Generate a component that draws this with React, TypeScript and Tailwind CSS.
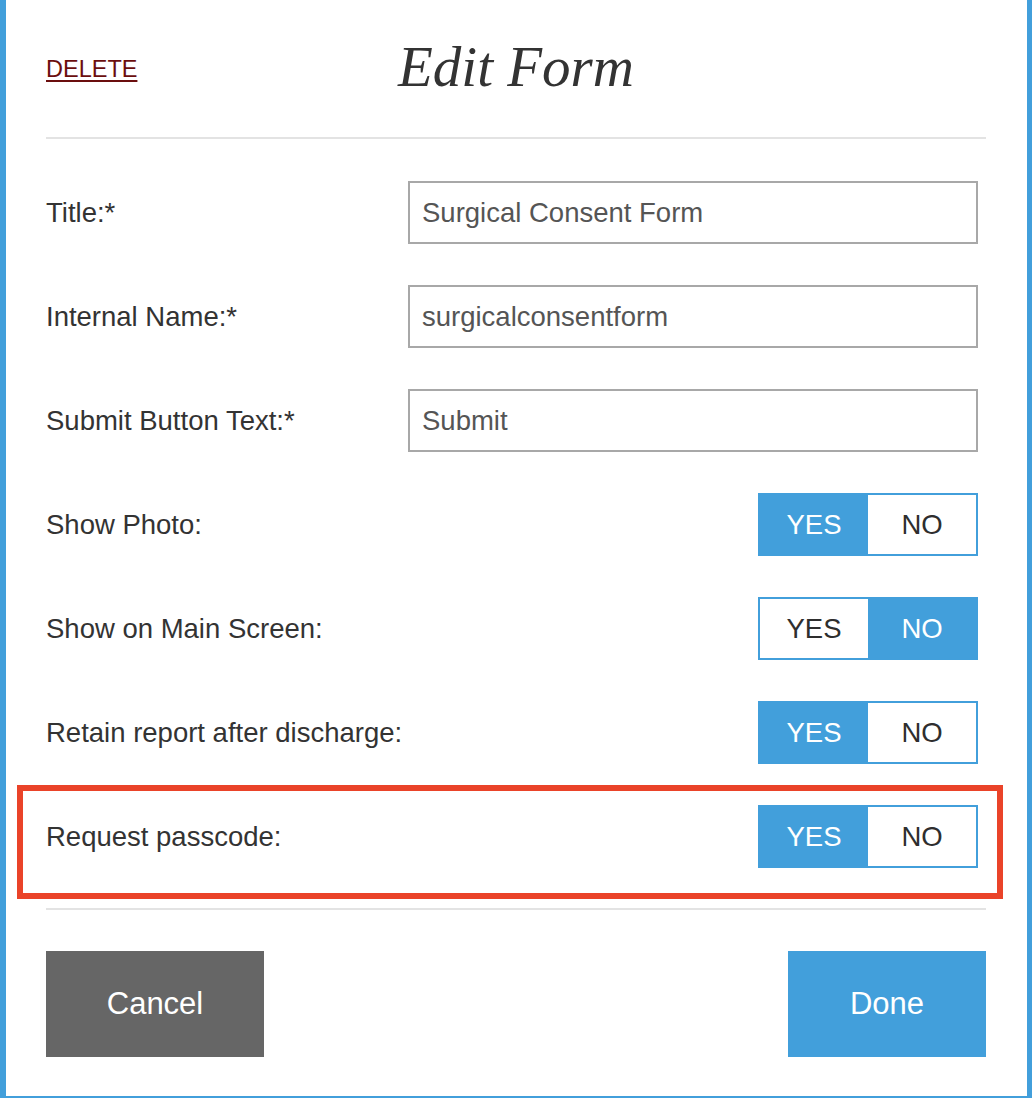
import React from "react";

type ToggleProps = {
    value: boolean;
};

function YesNoToggle({value}: ToggleProps) {
    return (
        <div className="flex h-[63px] w-[220px] border-2 border-[#429fdb] bg-white">
            <div
                className={
                    value
                        ? "flex flex-1 items-center justify-center bg-[#429fdb] text-white"
                        : "flex flex-1 items-center justify-center bg-white text-[#2e2e2e]"
                }
            >
                YES
            </div>
            <div
                className={
                    value
                        ? "flex flex-1 items-center justify-center bg-white text-[#2e2e2e]"
                        : "flex flex-1 items-center justify-center bg-[#429fdb] text-white"
                }
            >
                NO
            </div>
        </div>
    );
}

const textFields = [
    {label: "Title:*", value: "Surgical Consent Form"},
    {label: "Internal Name:*", value: "surgicalconsentform"},
    {label: "Submit Button Text:*", value: "Submit"},
];

const toggles = [
    {label: "Show Photo:", value: true},
    {label: "Show on Main Screen:", value: false},
    {label: "Retain report after discharge:", value: true},
];

export default function App() {
    return (
        <div className="min-h-[1098px] bg-white font-['Liberation_Sans',Arial,sans-serif]">
            <div className="border-b-[3px] border-l-[6px] border-r-[5px] border-[#429fdb] pb-[39px] pl-[40px] pr-[41px]">
                {/* header */}
                <div className="grid h-[137px] grid-cols-[1fr_auto_1fr] items-start pt-[38px]">
                    <div>
                        <a
                            href="#"
                            className="mt-[20px] inline-block text-[23.5px] leading-none text-[#6b0e0e] underline decoration-2 underline-offset-[3px]"
                        >
                            DELETE
                        </a>
                    </div>
                    <h1 className="font-['Liberation_Serif',Georgia,serif] text-[57px] italic leading-none text-[#333333]">
                        Edit Form
                    </h1>
                    <div />
                </div>
                <div className="h-[2px] bg-[#e3e3e3]" />

                {/* form rows */}
                <div className="flex flex-col gap-[41px] pr-[8px] pt-[42px] text-[27.5px] text-[#333333]">
                    {textFields.map((f) => (
                        <div key={f.label} className="grid h-[63px] grid-cols-[362px_1fr] items-center">
                            <label>{f.label}</label>
                            <input
                                readOnly
                                value={f.value}
                                className="h-[63px] w-full border-2 border-[#a8a8a8] bg-white px-[12px] text-[27.5px] text-[#555555] outline-none"
                            />
                        </div>
                    ))}
                    {toggles.map((t) => (
                        <div key={t.label} className="flex h-[63px] items-center justify-between">
                            <span>{t.label}</span>
                            <YesNoToggle value={t.value} />
                        </div>
                    ))}
                    <div className="relative flex h-[63px] items-center justify-between">
                        <div className="pointer-events-none absolute -bottom-[31px] -left-[29px] -right-[25px] -top-[20px] border-[6px] border-[#ea4329]" />
                        <span>Request passcode:</span>
                        <YesNoToggle value={true} />
                    </div>
                </div>

                <div className="mt-[40px] h-[2px] bg-[#e3e3e3]" />

                {/* actions */}
                <div className="mt-[41px] flex items-center justify-between">
                    <button className="h-[106px] w-[218px] bg-[#666666] text-[31px] text-white">
                        Cancel
                    </button>
                    <button className="h-[106px] w-[198px] bg-[#429fdb] text-[31px] text-white">
                        Done
                    </button>
                </div>
            </div>
        </div>
    );
}
